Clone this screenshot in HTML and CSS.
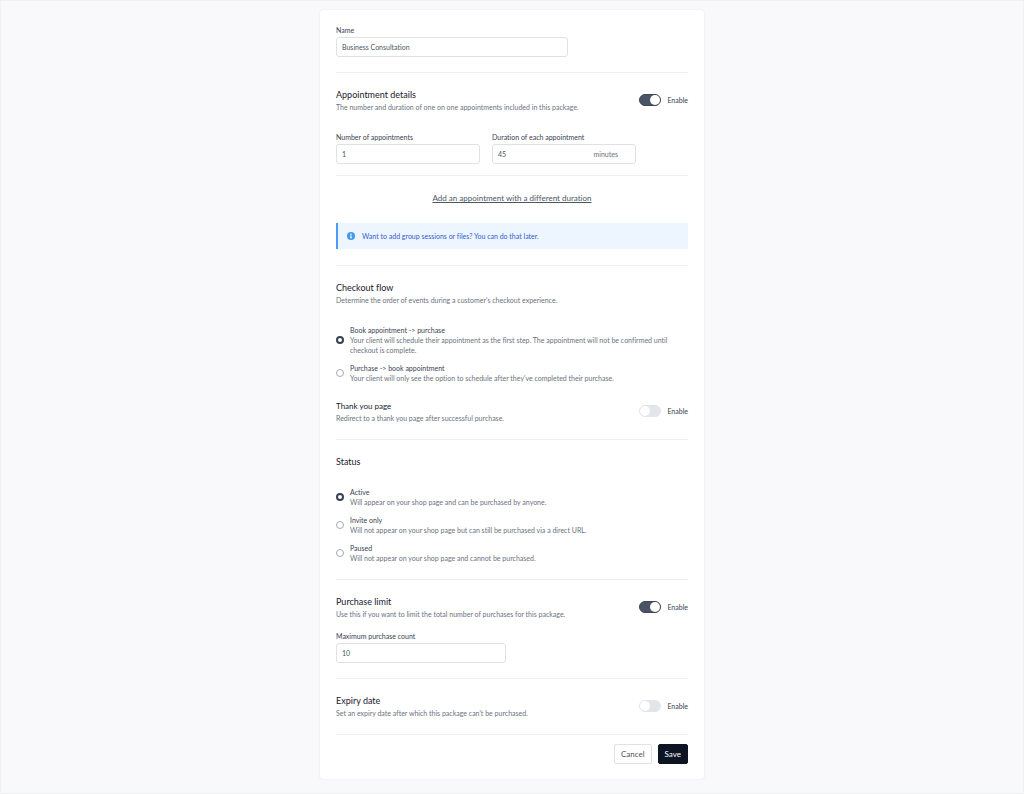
FILE: index.html
```html
<!doctype html>
<html lang="en">
<head>
  <meta charset="utf-8">
  <title>Edit package</title>
  <link rel="stylesheet" href="styles.css">
</head>

<body>
  <form class="card">
    <section class="section">
      <div class="field name-field">
        <label for="name">Name</label>
        <input type="text" class="input" id="name" value="Business Consultation">
      </div>
    </section>

    <section class="section details">
      <div class="section-head">
        <div>
          <h2>Appointment details</h2>
          <p>The number and duration of one on one appointments included in this package.</p>
        </div>
        <label class="toggle"><input type="checkbox" checked>Enable</label>
      </div>
      <div class="field-row">
        <div class="field">
          <label for="count">Number of appointments</label>
          <input type="text" class="input" id="count" value="1">
        </div>
        <div class="field">
          <label for="duration">Duration of each appointment</label>
          <div class="input input-group">
            <input type="text" id="duration" value="45">
            <span>minutes</span>
          </div>
        </div>
      </div>
    </section>

    <section class="section extra">
      <a href="#" class="add-link">Add an appointment with a different duration</a>
      <div class="notice">
        <svg class="notice-icon" viewBox="0 0 16 16">
          <circle cx="8" cy="8" r="8" fill="#4299f0"/>
          <circle cx="8" cy="4.4" r="1.5" fill="#fff"/>
          <path d="M6 7h3v4h1v1.6H6V11h1V8.6H6z" fill="#fff"/>
        </svg>
        Want to add group sessions or files? You can do that later.
      </div>
    </section>

    <section class="section checkout">
      <h2>Checkout flow</h2>
      <p>Determine the order of events during a customer's checkout experience.</p>
      <div class="radios">
        <label class="radio">
          <input type="radio" name="flow" checked>
          <span><b>Book appointment -&gt; purchase</b>Your client will schedule their appointment as the first step. The appointment will not be confirmed until checkout is complete.</span>
        </label>
        <label class="radio">
          <input type="radio" name="flow">
          <span><b>Purchase -&gt; book appointment</b>Your client will only see the option to schedule after they've completed their purchase.</span>
        </label>
      </div>
      <div class="section-head thanks">
        <div>
          <h3>Thank you page</h3>
          <p>Redirect to a thank you page after successful purchase.</p>
        </div>
        <label class="toggle"><input type="checkbox">Enable</label>
      </div>
    </section>

    <section class="section status">
      <h2>Status</h2>
      <div class="radios">
        <label class="radio">
          <input type="radio" name="status" checked>
          <span><b>Active</b>Will appear on your shop page and can be purchased by anyone.</span>
        </label>
        <label class="radio">
          <input type="radio" name="status">
          <span><b>Invite only</b>Will not appear on your shop page but can still be purchased via a direct URL.</span>
        </label>
        <label class="radio">
          <input type="radio" name="status">
          <span><b>Paused</b>Will not appear on your shop page and cannot be purchased.</span>
        </label>
      </div>
    </section>

    <section class="section">
      <div class="section-head">
        <div>
          <h2>Purchase limit</h2>
          <p>Use this if you want to limit the total number of purchases for this package.</p>
        </div>
        <label class="toggle"><input type="checkbox" checked>Enable</label>
      </div>
      <div class="field limit-field">
        <label for="max">Maximum purchase count</label>
        <input type="text" class="input" id="max" value="10">
      </div>
    </section>

    <section class="section expiry">
      <div class="section-head">
        <div>
          <h2>Expiry date</h2>
          <p>Set an expiry date after which this package can't be purchased.</p>
        </div>
        <label class="toggle"><input type="checkbox">Enable</label>
      </div>
    </section>

    <div class="actions">
      <button type="button" class="btn">Cancel</button>
      <button type="submit" class="btn btn-primary">Save</button>
    </div>
  </form>
</body>

</html>
```
FILE: styles.css
```css
* {
  box-sizing: border-box;
}
body {
  margin: 0;
  min-height: 100vh;
  padding: 9px 16px 12px;
  border: 1px solid #f0f1f3;
  background: #f9f9fb;
  color: #6b7280;
  font-family: Lato, "Liberation Sans", sans-serif;
  font-size: 7px;
  font-variant-ligatures: none;
  line-height: 10px;
}
.card {
  max-width: 384px;
  margin: 0 auto;
  padding: 0 16px 15px;
  background: #fff;
  border-radius: 3px;
  box-shadow: 0 0 2px rgba(0, 0, 0, 0.1);
}

/* sections */
.section {
  padding: 15px 0;
  border-bottom: 1px solid #eeeff1;
}
.section.details {
  padding-bottom: 11px;
}
.section.extra {
  padding: 16px 0;
}
.section.checkout,
.section.status,
.section.expiry {
  padding-bottom: 16px;
}
.section-head {
  display: flex;
  justify-content: space-between;
  align-items: center;
}
h2, h3, p {
  margin: 0;
  font-weight: 400;
}
h2 {
  color: #1a202e;
  font-size: 9px;
  line-height: 14px;
}
h3 {
  color: #1a202e;
  font-size: 8px;
  line-height: 14px;
}

/* fields */
.field {
  display: flex;
  flex-direction: column;
  gap: 2px;
  color: #374151;
}
.name-field {
  width: 66%;
}
.field-row {
  display: grid;
  grid-template-columns: 144px 144px;
  gap: 12px;
  margin-top: 20px;
}
.limit-field {
  width: 170px;
  margin-top: 12px;
}
.input {
  width: 100%;
  height: 20px;
  padding: 0 5px;
  border: 1px solid #dfe1e5;
  border-radius: 3px;
  background: #fff;
  color: #4b5563;
  font: inherit;
}
.input-group {
  display: flex;
  align-items: center;
  padding-right: 17px;
  color: #6b7280;
}
.input-group input {
  flex: 1;
  min-width: 0;
  padding: 0;
  border: 0;
  color: #4b5563;
  font: inherit;
}

/* toggle switch */
.toggle {
  display: flex;
  align-items: center;
  gap: 6px;
  color: #374151;
}
.toggle input {
  appearance: none;
  display: flex;
  width: 22px;
  height: 12px;
  margin: 0;
  border: 1px solid #e2e5e9;
  border-radius: 6px;
  background: #e2e5e9;
}
.toggle input::before {
  content: "";
  width: 10px;
  height: 10px;
  border-radius: 50%;
  background: #fff;
}
.toggle input:checked {
  justify-content: flex-end;
  border-color: #3d4556;
  background: #4b5465;
}

/* link and notice */
.add-link {
  display: block;
  color: #4b5563;
  font-size: 8px;
  line-height: 12px;
  text-align: center;
}
.notice {
  display: flex;
  align-items: center;
  gap: 7px;
  margin-top: 19px;
  padding: 8px 9px;
  border-left: 2px solid #4c9bf2;
  background: #edf6ff;
  color: #3459d4;
}
.notice-icon {
  width: 8px;
  height: 8px;
}

/* radios */
.radios {
  display: grid;
  gap: 8px;
  margin-top: 20px;
}
.status .radios {
  margin-top: 18px;
}
.radio {
  display: flex;
  align-items: center;
  gap: 6px;
}
.radio input {
  appearance: none;
  flex: none;
  width: 8px;
  height: 8px;
  margin: 0;
  border: 1px solid #a3a8b3;
  border-radius: 50%;
  background: #fff;
}
.radio input:checked {
  border: 2px solid #374151;
}
.radio b {
  display: block;
  color: #374151;
  font-weight: 400;
}
.thanks {
  margin-top: 16px;
}

/* buttons */
.actions {
  display: flex;
  justify-content: flex-end;
  gap: 6px;
  padding-top: 9px;
}
.btn {
  height: 20px;
  padding: 0 6px;
  border: 1px solid #dfe1e5;
  border-radius: 2px;
  background: #fff;
  color: #4b5563;
  font: 8px Lato, "Liberation Sans", sans-serif;
}
.btn-primary {
  border-color: #0d1424;
  background: #0d1424;
  color: #fff;
}
```
